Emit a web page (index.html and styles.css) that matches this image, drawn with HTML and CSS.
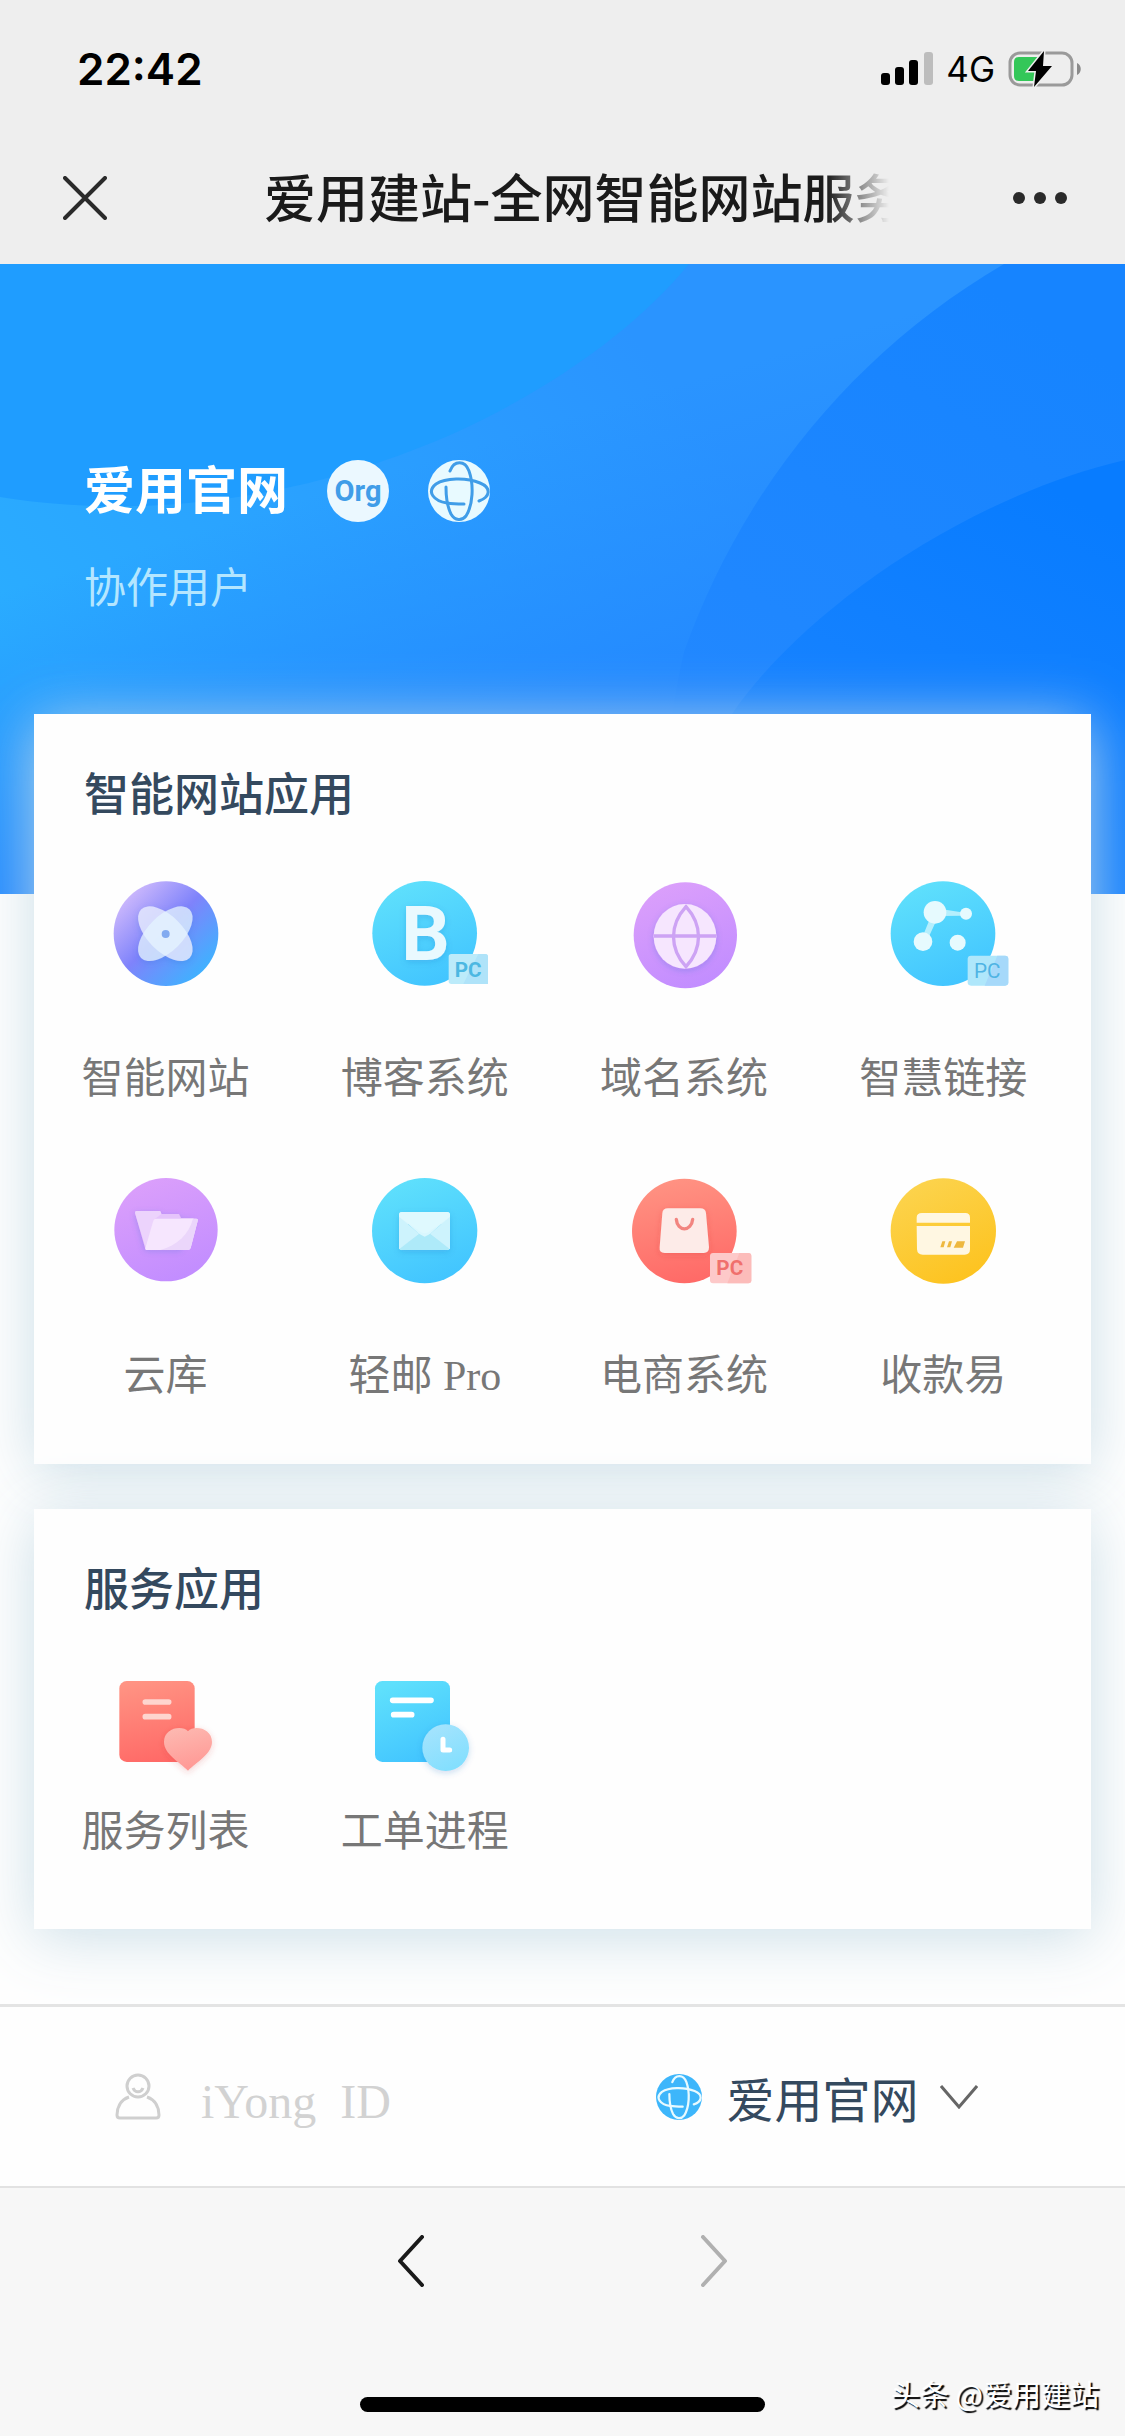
FILE: index.html
```html
<!DOCTYPE html>
<html lang="zh-CN">
<head>
<meta charset="utf-8">
<meta name="viewport" content="width=device-width, initial-scale=1">
<title>爱用建站-全网智能网站服务</title>
<link rel="stylesheet" href="styles.css">
</head>
<body>
<svg class="defs" width="0" height="0" aria-hidden="true">
  <defs>
    <linearGradient id="violet" x1="0.1" y1="0.1" x2="0.85" y2="0.85">
      <stop offset="0" stop-color="#d3bdfc"/><stop offset="0.5" stop-color="#7f83fb"/><stop offset="1" stop-color="#41b0ff"/>
    </linearGradient>
    <linearGradient id="cyan" x1="0.3" y1="0" x2="0.7" y2="1">
      <stop offset="0" stop-color="#5fe0fc"/><stop offset="1" stop-color="#41c4ff"/>
    </linearGradient>
    <linearGradient id="purple" x1="0.2" y1="0" x2="0.6" y2="1">
      <stop offset="0" stop-color="#dca0fb"/><stop offset="1" stop-color="#c28dff"/>
    </linearGradient>
    <linearGradient id="coral" x1="0.3" y1="0" x2="0.5" y2="1">
      <stop offset="0" stop-color="#ff9383"/><stop offset="1" stop-color="#ff6a67"/>
    </linearGradient>
    <linearGradient id="gold" x1="0.2" y1="0" x2="0.7" y2="1">
      <stop offset="0" stop-color="#fcd44f"/><stop offset="1" stop-color="#fdc31f"/>
    </linearGradient>
    <linearGradient id="clock" x1="0" y1="0" x2="0.5" y2="1">
      <stop offset="0" stop-color="#a9e4fd"/><stop offset="1" stop-color="#84dffe"/>
    </linearGradient>
    <linearGradient id="heart" x1="0" y1="0" x2="0.3" y2="1">
      <stop offset="0" stop-color="#fdbbb3"/><stop offset="1" stop-color="#ff9a96"/>
    </linearGradient>
    <filter id="soft" x="-30%" y="-30%" width="160%" height="160%">
      <feDropShadow dx="0" dy="6" stdDeviation="9" flood-color="#2060c0" flood-opacity="0.22"/>
    </filter>
    <filter id="softWarm" x="-30%" y="-30%" width="160%" height="160%">
      <feDropShadow dx="0" dy="6" stdDeviation="9" flood-color="#d03030" flood-opacity="0.22"/>
    </filter>
    <symbol id="globe" viewBox="0 0 62 62">
      <circle class="globe-disc" cx="31" cy="31" r="31" stroke="none"/>
      <g fill="none" stroke-width="3" stroke-linecap="round">
        <path d="M22 11C26 0 37 0 41 11C46 25 45 45 38 56C34 61 27 61 23 54C19 46 18 37 18 27"/>
        <path d="M51 41C62 37 64 28 52 23C38 17 17 18 8 24C-2 32 6 41 19 43C25 44 30 44 36 44"/>
      </g>
    </symbol>
  </defs>
</svg>

<header class="topbar">
  <div class="status">
    <span class="clock">22:42</span>
    <div class="status-icons">
      <svg width="52" height="34" viewBox="0 0 52 34" aria-hidden="true">
        <rect x="0" y="21" width="9" height="12" rx="3"/><rect x="14" y="15" width="9" height="18" rx="3"/>
        <rect x="28" y="8" width="9" height="25" rx="3"/><rect x="43" y="0" width="9" height="33" rx="3" fill="#bdbdbd"/>
      </svg>
      <span class="network">4G</span>
      <svg width="74" height="36" viewBox="0 0 74 36" aria-hidden="true">
        <rect x="2" y="2" width="62" height="32" rx="10" fill="none" stroke="#9a9a9a" stroke-width="3"/>
        <path d="M69 12C74 14 74 22 69 24Z" fill="#8a8a8a"/>
        <path d="M11 6H32L30 30H11Q6 30 6 25V11Q6 6 11 6Z" fill="#34c759"/>
        <path d="M36 0L20 20H28L26 36L44 15H35Z" fill="#000" stroke="#eee" stroke-width="3" paint-order="stroke"/>
      </svg>
    </div>
  </div>
  <nav class="titlebar">
    <button class="icon-button" type="button" aria-label="关闭">
      <svg width="44" height="44" viewBox="0 0 44 44" fill="none" stroke="#2a2a2a" stroke-width="4" stroke-linecap="round"><path d="M2 2L42 42M42 2L2 42"/></svg>
    </button>
    <h1 class="page-title">爱用建站-全网智能网站服务</h1>
    <button class="icon-button" type="button" aria-label="更多">
      <svg width="54" height="12" viewBox="0 0 54 12" fill="#2a2a2a"><circle cx="6" cy="6" r="6"/><circle cx="27" cy="6" r="6"/><circle cx="48" cy="6" r="6"/></svg>
    </button>
  </nav>
</header>

<main>
  <section class="hero">
    <svg class="hero-art" viewBox="0 0 1125 630" preserveAspectRatio="none" aria-hidden="true">
      <defs>
        <linearGradient id="heroBase" x1="0" y1="0.6" x2="0.65" y2="0.3">
          <stop offset="0" stop-color="#2aadff"/><stop offset="1" stop-color="#2a94ff"/>
        </linearGradient>
        <linearGradient id="heroLow" x1="0.4" y1="0.3" x2="0.62" y2="0.7">
          <stop offset="0" stop-color="#2388ff" stop-opacity="0"/><stop offset="1" stop-color="#2388ff"/>
        </linearGradient>
        <linearGradient id="waveB" gradientUnits="userSpaceOnUse" x1="950" y1="0" x2="680" y2="440">
          <stop offset="0" stop-color="#1684ff"/><stop offset="1" stop-color="#2288ff"/>
        </linearGradient>
        <linearGradient id="waveC" x1="0.7" y1="0" x2="0.3" y2="0.8">
          <stop offset="0" stop-color="#087cff"/><stop offset="1" stop-color="#1a84ff"/>
        </linearGradient>
      </defs>
      <rect width="1125" height="630" fill="url(#heroBase)"/>
      <rect width="1125" height="630" fill="url(#heroLow)"/>
      <path d="M0 0H689C640 60 560 120 459 167C330 225 170 260 0 233Z" fill="#1f9dff"/>
      <path d="M1004 0C850 90 740 230 684 388C665 470 660 550 660 630H1125V0Z" fill="url(#waveB)"/>
      <path d="M1125 196C960 235 800 350 732 450C700 510 690 570 690 630H1125Z" fill="url(#waveC)"/>
    </svg>
    <div class="account">
      <div class="account-line">
        <h2 class="account-name">爱用官网</h2>
        <span class="org-badge">Org</span>
        <svg class="globe-light" width="62" height="62" role="img" aria-label="网站"><use href="#globe"/></svg>
      </div>
      <p class="account-role">协作用户</p>
    </div>
  </section>

  <div class="cards">
    <section class="card">
      <h2 class="card-title">智能网站应用</h2>
      <div class="app-grid">
        <a class="app" href="#site">
          <svg width="140" height="120" viewBox="47 39 420 360" aria-hidden="true">
            <circle cx="257" cy="221" r="157" fill="url(#violet)"/>
            <g filter="url(#soft)">
              <ellipse cx="255" cy="221" rx="103" ry="53" transform="rotate(45 255 221)" fill="#e8edff" fill-opacity="0.8"/>
              <ellipse cx="255" cy="221" rx="103" ry="53" transform="rotate(-45 255 221)" fill="#e4f4ff" fill-opacity="0.75"/>
            </g>
            <circle cx="256" cy="222" r="12" fill="#82aaf0"/>
          </svg>
          <span>智能网站</span>
        </a>
        <a class="app" href="#blog">
          <svg width="140" height="120" viewBox="825 39 420 360">
            <circle cx="1034" cy="220" r="157" fill="url(#cyan)"/>
            <text class="glyph-b" x="964" y="300" filter="url(#soft)">B</text>
            <rect x="1106" y="282" width="118" height="90" rx="8" fill="#bcebfa"/>
            <path d="M1195 282H1216Q1224 282 1224 290V372H1150Z" fill="#afe3f9"/>
            <text class="glyph-pc" x="1124" y="351" fill="#4cb8e2">PC</text>
          </svg>
          <span>博客系统</span>
        </a>
        <a class="app" href="#domain">
          <svg width="140" height="120" viewBox="42 39 420 360" aria-hidden="true">
            <ellipse cx="256" cy="226" rx="155" ry="159" fill="url(#purple)"/>
            <ellipse cx="255" cy="229" rx="94" ry="97" fill="#f6e6fe" filter="url(#soft)"/>
            <path d="M162 228H348M258 140C208 195 208 265 258 320C308 265 308 195 258 140Z" fill="none" stroke="#cda3f4" stroke-width="10"/>
          </svg>
          <span>域名系统</span>
        </a>
        <a class="app" href="#link">
          <svg width="140" height="120" viewBox="820 39 420 360">
            <circle cx="1030" cy="221" r="157" fill="url(#cyan)"/>
            <path d="M1028 148L1085 157V167L1028 168ZM990 178L972 222L990 225L1008 186Z" fill="#b5effd"/>
            <g fill="#e6fafe"><circle cx="1006" cy="157" r="34"/><circle cx="1099" cy="161" r="18"/><circle cx="970" cy="245" r="28"/><circle cx="1074" cy="248" r="24"/></g>
            <rect x="1104" y="287" width="122" height="90" rx="10" fill="#afe7fb"/>
            <path d="M1193 287H1216Q1226 287 1226 297V367Q1226 377 1216 377H1155Z" fill="#a6d9fa"/>
            <text class="glyph-pc thin" x="1123" y="354" fill="#4fb4e4">PC</text>
          </svg>
          <span>智慧链接</span>
        </a>
        <a class="app" href="#drive">
          <svg width="140" height="120" viewBox="47 60 420 360" aria-hidden="true">
            <circle cx="257" cy="239" r="155" fill="url(#purple)"/>
            <path d="M168 183H238Q242 183 243 192H296L302 204H340L300 296H195L164 188Q164 183 168 183Z" fill="#e5c4fb" filter="url(#soft)"/>
            <path d="M168 183H238Q242 183 243 192L224 207L195 290L164 188Q164 183 168 183Z" fill="#ecd3fc"/>
            <path d="M228 206H348Q354 206 352 213L331 294Q329 300 322 300H200Q193 300 195 293L219 212Q221 206 228 206Z" fill="#f6e6fe"/>
            <path d="M338 206H348Q354 206 352 213L331 294Q329 300 322 300H240C290 285 325 255 338 206Z" fill="#ebd6fb"/>
          </svg>
          <span>云库</span>
        </a>
        <a class="app" href="#mail">
          <svg width="140" height="120" viewBox="825 60 420 360" aria-hidden="true">
            <defs>
              <linearGradient id="fold" x1="0" y1="0" x2="0" y2="1">
                <stop offset="0" stop-color="#8bdcf8"/><stop offset="1" stop-color="#d2f4fe"/>
              </linearGradient>
            </defs>
            <circle cx="1034" cy="242" r="158" fill="url(#cyan)"/>
            <rect x="957" y="186" width="153" height="114" rx="9" fill="#d9f7fe" filter="url(#soft)"/>
            <path d="M984 222L1034 266L1084 222L1110 262V296H957V262Z" fill="url(#fold)"/>
            <path d="M957 200L1018 252L957 296ZM1110 200L1050 252L1110 296Z" fill="#cdf3fd"/>
            <path d="M984 222L1034 266L1018 252ZM1084 222L1034 266L1050 252Z" fill="#8bdcf8"/>
            <path d="M959 296L1018 252L1034 260L1050 252L1108 296Q1106 300 1101 300H966Q961 300 959 296Z" fill="#aeeaf9"/>
            <path d="M966 186H1101Q1110 186 1110 195V200L1084 220L1046 246Q1034 254 1022 246L984 220L957 200V195Q957 186 966 186Z" fill="#dff9fe"/>
          </svg>
          <span>轻邮 Pro</span>
        </a>
        <a class="app" href="#shop">
          <svg width="140" height="120" viewBox="42 60 420 360">
            <circle cx="253" cy="243" r="157" fill="url(#coral)"/>
            <path d="M204 175H300Q317 175 318 190L327 292Q327 309 311 309H194Q177 309 179 292L187 190Q188 175 204 175Z" fill="#fdebe8" filter="url(#softWarm)"/>
            <path d="M229 208C232 246 274 246 278 208" fill="none" stroke="#f28580" stroke-width="10" stroke-linecap="round"/>
            <rect x="330" y="309" width="124" height="91" rx="9" fill="#fdc9c9"/>
            <path d="M418 309H445Q454 309 454 318V391Q454 400 445 400H382Z" fill="#fcbcba"/>
            <text class="glyph-pc" x="349" y="376" fill="#f0706d">PC</text>
          </svg>
          <span>电商系统</span>
        </a>
        <a class="app" href="#pay">
          <svg width="140" height="120" viewBox="820 60 420 360" aria-hidden="true">
            <circle cx="1031" cy="243" r="158" fill="url(#gold)"/>
            <path d="M967 189H1097Q1111 189 1111 203V218H951V203Q951 189 967 189ZM951 228H1111V298Q1111 314 1095 314H969Q953 314 952 298Z" fill="#fff7e2"/>
            <path d="M1028 274H1037L1032 292H1022ZM1048 274H1057L1052 292H1042ZM1072 274H1096L1090 293H1062Z" fill="#eeb83f"/>
          </svg>
          <span>收款易</span>
        </a>
      </div>
    </section>

    <section class="card card-services">
      <h2 class="card-title">服务应用</h2>
      <div class="app-grid">
        <a class="app" href="#services">
          <svg width="140" height="120" viewBox="50 54 420 360" aria-hidden="true">
            <rect x="120" y="93" width="226" height="243" rx="22" fill="url(#coral)"/>
            <path d="M198 156H268M198 200H268" stroke="#fed5cf" stroke-width="17" stroke-linecap="round"/>
            <path d="M326 362C300 336 254 312 254 276C254 234 308 224 326 244C344 224 398 234 398 276C398 312 352 336 326 362Z" fill="url(#heart)" filter="url(#softWarm)"/>
          </svg>
          <span>服务列表</span>
        </a>
        <a class="app" href="#orders">
          <svg width="140" height="120" viewBox="828 54 420 360" aria-hidden="true">
            <rect x="888" y="93" width="225" height="243" rx="22" fill="url(#cyan)"/>
            <path d="M941 151H1056M944 194H998" stroke="#fff" stroke-width="17" stroke-linecap="round"/>
            <circle cx="1100" cy="293" r="70" fill="url(#clock)" filter="url(#soft)"/>
            <path d="M1092 268V300H1112" fill="none" stroke="#fff" stroke-width="15" stroke-linecap="round" stroke-linejoin="round"/>
          </svg>
          <span>工单进程</span>
        </a>
      </div>
    </section>
  </div>
</main>

<footer class="footer">
  <div class="tabs">
    <a class="tab tab-id" href="#id">
      <svg width="46" height="48" viewBox="0 0 46 48" fill="none" stroke="#cfcfcf" stroke-width="3" aria-hidden="true">
        <circle cx="23" cy="13" r="11"/><path d="M18 15C20 20 26 20 28 15"/>
        <path d="M14 24C5 27 2 35 2 42Q2 45 5 45H41Q44 45 44 42C44 35 41 27 32 24"/>
      </svg>
      <span class="tab-id-label">iYong&nbsp; ID</span>
    </a>
    <button class="tab tab-site" type="button">
      <svg class="globe-blue" width="46" height="46" aria-hidden="true"><use href="#globe"/></svg>
      <span>爱用官网</span>
      <svg class="chevron" width="38" height="24" viewBox="0 0 38 24" fill="none" stroke="#666" stroke-width="3" aria-hidden="true"><path d="M1 1L19 22L37 1"/></svg>
    </button>
  </div>
  <div class="browser-bar">
    <div class="history">
      <button class="icon-button" type="button" aria-label="后退">
        <svg width="28" height="52" viewBox="0 0 28 52" fill="none" stroke="#1a1a1a" stroke-width="4" stroke-linecap="round" stroke-linejoin="round"><path d="M25 2L3 26L25 50"/></svg>
      </button>
      <button class="icon-button" type="button" aria-label="前进">
        <svg width="28" height="52" viewBox="0 0 28 52" fill="none" stroke="#b0b0b0" stroke-width="4" stroke-linecap="round" stroke-linejoin="round"><path d="M3 2L25 26L3 50"/></svg>
      </button>
    </div>
    <div class="home-indicator"></div>
    <span class="watermark">头条 @爱用建站</span>
  </div>
</footer>
</body>
</html>
```
FILE: styles.css
```css
* {
  box-sizing: border-box;
}

body {
  margin: 0;
  background: #fefefe;
  color: #777;
  font-family: "Liberation Serif", "Noto Sans CJK SC", sans-serif;
}

h1,
h2,
p {
  margin: 0;
}

button {
  margin: 0;
  padding: 0;
  border: 0;
  background: none;
  font: inherit;
  color: inherit;
}

a {
  color: inherit;
  text-decoration: none;
}

svg {
  display: block;
  flex: none;
}

.defs {
  position: absolute;
}

.icon-button {
  display: flex;
}

/* Status bar and title bar */
.topbar {
  background: #eee;
  color: #000;
}

.status {
  display: flex;
  justify-content: space-between;
  align-items: center;
  min-height: 132px;
  padding: 6px 43px 0 77px;
  font-family: Inter, sans-serif;
}

.clock {
  font-size: 44px;
  font-weight: 600;
}

.status-icons {
  display: flex;
  align-items: center;
  gap: 13px;
}

.network {
  font-size: 35px;
}

.titlebar {
  display: grid;
  grid-template-columns: 201px 1fr 178px;
  align-items: center;
  min-height: 132px;
  padding: 0 58px 0 63px;
}

.titlebar .icon-button:last-child {
  justify-self: end;
}

.page-title {
  overflow: hidden;
  padding-bottom: 4px;
  color: #1a1a1a;
  font-family: "Noto Sans CJK SC", sans-serif;
  font-size: 52px;
  font-weight: 500;
  line-height: 78px;
  white-space: nowrap;
  -webkit-mask-image: linear-gradient(to right, #000 90%, transparent);
  mask-image: linear-gradient(to right, #000 90%, transparent);
}

/* Account banner */
.hero {
  position: relative;
  padding: 188px 84px 270px;
  color: #fff;
}

.hero-art {
  position: absolute;
  inset: 0;
  width: 100%;
  height: 100%;
}

.account {
  position: relative;
}

.account-line {
  display: flex;
  align-items: center;
  gap: 39px;
}

.account-name {
  padding-bottom: 8px;
  font-family: "Noto Sans CJK SC", sans-serif;
  font-size: 51px;
  font-weight: 700;
  line-height: 70px;
}

.org-badge {
  display: flex;
  align-items: center;
  justify-content: center;
  width: 62px;
  height: 62px;
  border-radius: 50%;
  background: #ebf8ff;
  color: #409de8;
  font-family: Roboto, sans-serif;
  font-size: 29px;
  font-weight: 700;
}

.globe-light {
  fill: #e8faff;
  stroke: #409de8;
}

.globe-blue {
  fill: #3db6fb;
  stroke: #e8faff;
}

.account-role {
  margin-top: 26px;
  padding-bottom: 2px;
  color: #b4e6ff;
  font-size: 42px;
  line-height: 66px;
}

/* Cards */
.cards {
  position: relative;
  display: grid;
  gap: 45px;
  margin-top: -180px;
  padding: 0 34px 75px;
}

.card {
  padding: 48px 18px 58px 2px;
  background: #fefefe;
  box-shadow: 0 8px 56px rgba(198, 220, 229, 0.9);
}

.card-title {
  padding-left: 48px;
  color: #34495e;
  font-family: "Noto Sans CJK SC", sans-serif;
  font-size: 45px;
  font-weight: 500;
  line-height: 60px;
}

.app-grid {
  display: grid;
  grid-template-columns: repeat(4, 1fr);
  row-gap: 61px;
  margin-top: 51px;
}

.app {
  display: flex;
  flex-direction: column;
  align-items: center;
  gap: 56px;
  font-size: 42px;
  line-height: 60px;
}

.card-services {
  padding-bottom: 67px;
}

.card-services .app {
  gap: 14px;
}

.glyph-b {
  fill: #e9f9fe;
  font: 700 228px Roboto, sans-serif;
}

.glyph-pc {
  font: 700 62px Roboto, sans-serif;
}

.glyph-pc.thin {
  font-weight: 400;
}

/* Bottom bars */
.tabs {
  display: grid;
  grid-template-columns: 1fr 1fr;
  min-height: 182px;
  border-top: 3px solid #e4e4e4;
  background: #fefefe;
}

.tab {
  display: flex;
  align-items: center;
  font-size: 48px;
}

.tab-id {
  gap: 40px;
  padding-left: 115px;
  color: #d2d2d2;
}

.tab-id-label {
  padding-top: 10px;
}

.tab-site {
  gap: 25px;
  padding-left: 93px;
  color: #34495e;
}

.chevron {
  margin-left: -4px;
}

.browser-bar {
  position: relative;
  display: flex;
  flex-direction: column;
  align-items: center;
  gap: 110px;
  padding: 47px 0 25px;
  border-top: 2px solid #e2e2e2;
  background: #f7f7f7;
}

.history {
  display: flex;
  gap: 275px;
}

.home-indicator {
  width: 36%;
  height: 15px;
  border-radius: 8px;
  background: #000;
}

.watermark {
  position: absolute;
  right: 26px;
  bottom: 22px;
  color: #fff;
  font-family: "Noto Sans CJK SC", sans-serif;
  font-size: 29px;
  line-height: 44px;
  text-shadow: 2px 2px 1px #000;
}
```
